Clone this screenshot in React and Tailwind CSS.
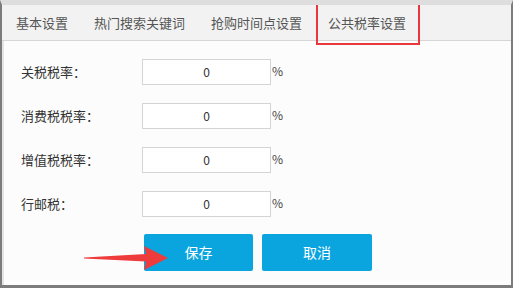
import React from 'react'

const TABS = ['基本设置', '热门搜索关键词', '抢购时间点设置', '公共税率设置']
const ROWS = ['关税税率：', '消费税税率：', '增值税税率：', '行邮税：']

const FONT = { fontFamily: '"Noto Sans CJK SC", "Noto Sans", sans-serif' }

function Arrow() {
  return (
    <svg className="absolute left-[82px] top-[240px]" width="86" height="26" viewBox="0 0 86 26">
      <polygon points="0,12.5 62,9 60,1 84,13 60,25 62,16.5 0,13.5" fill="#ee3b3b" />
    </svg>
  )
}

export default function App() {
  return (
    <div style={FONT} className="relative w-[513px] h-[288px] overflow-hidden bg-[#fcfcfc] border-x-2 border-b-[3px] border-t-[5px] border-x-[#7c7c7c] border-b-[#7c7c7c] border-t-[#dedede] flex flex-col">
      <div className="h-[36px] flex items-center pl-[1px] bg-[#f2f2f2] border-b border-[#d6d6d6] shrink-0">
        {TABS.map((t, i) => (
          <div key={t} className="relative px-[13px] text-[13px] text-[#555] leading-none">
            {t}
            {i === 3 && (
              <div className="absolute left-[1px] right-[-1px] top-[-15px] bottom-[-16px] border-2 border-[#e8383d]" />
            )}
          </div>
        ))}
      </div>
      <div className="flex-1 border-l-[2px] border-[#e4e4e4] pl-[17px] pt-[18px]">
        <div className="flex flex-col gap-[19px]">
          {ROWS.map(r => (
            <div key={r} className="flex items-center h-[25px]">
              <div className="w-[121px] text-[13px] text-[#333]">{r}</div>
              <div className="w-[129px] h-[26px] bg-white border border-[#d4d4d4] flex items-center justify-center text-[12px] text-[#333]">0</div>
              <span className="ml-[1px] -mt-[1px] text-[12px] text-[#444]">%</span>
            </div>
          ))}
        </div>
        <div className="flex gap-[9px] mt-[18px] ml-[123px]">
          <button className="w-[109px] h-[37px] rounded-[2px] bg-[#0aa5de] text-white text-[14px]">保存</button>
          <button className="w-[110px] h-[37px] rounded-[2px] bg-[#0aa5de] text-white text-[14px]">取消</button>
        </div>
      </div>
      <Arrow />
    </div>
  )
}
